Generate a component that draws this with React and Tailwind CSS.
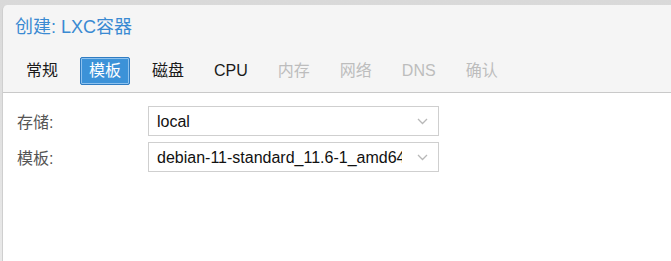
import React from "react";

const tabs = [
  { label: "常规" },
  { label: "模板", active: true },
  { label: "磁盘" },
  { label: "CPU" },
  { label: "内存", disabled: true },
  { label: "网络", disabled: true },
  { label: "DNS", disabled: true },
  { label: "确认", disabled: true },
];

const Chevron = () => (
  <svg width="11" height="7" viewBox="0 0 11 7" fill="none">
    <path d="M1 1l4.5 4.5L10 1" stroke="#b8b8b8" strokeWidth="1.3" />
  </svg>
);

const Combo = ({ value }) => (
  <div className="flex h-[30px] w-[291px] items-center border border-[#cfcfcf] bg-white">
    <div className="flex-1 overflow-hidden whitespace-nowrap pl-[8px] pt-[2px] text-[16px] text-[#111]">
      {value}
    </div>
    <div className="flex w-[36px] items-center justify-center pl-[4px]">
      <Chevron />
    </div>
  </div>
);

export default function App() {
  return (
    <div
      className="h-[261px] w-[671px] overflow-hidden bg-gradient-to-b from-[#d9d9d9] to-[#e9e9e9] pl-[2px] pt-[5px]"
      style={{ fontFamily: '"Liberation Sans", "Noto Sans CJK SC", sans-serif' }}
    >
      <div className="flex h-full flex-col overflow-hidden rounded-tl-[5px] border-l border-[#cfcfcf] bg-[#f5f5f5]">
        {/* Header */}
        <div className="h-[88px] border-b border-[#c9c9c9]">
          <div className="pl-[12px] pt-[10px] text-[18px] leading-[24px] text-[#3a8ad2]">
            创建: LXC容器
          </div>
          <div className="mt-[18px] flex gap-[14px] pl-[15px]">
            {tabs.map((t) => (
              <div
                key={t.label}
                className={
                  t.active
                    ? "flex h-[28px] items-center rounded-[2px] border border-[#2f7cc2] bg-[#3c92d8] px-[8px] text-[16px] text-white shadow-[inset_0_0_0_1px_#8ec2ee]"
                    : t.disabled
                    ? "flex h-[28px] items-center px-[8px] text-[16px] text-[#bdbdbd]"
                    : "flex h-[28px] items-center px-[8px] text-[16px] text-[#1a1a1a]"
                }
              >
                {t.label}
              </div>
            ))}
          </div>
        </div>

        {/* Body */}
        <div className="flex-1 bg-white pl-[14px] pt-[13px]">
          <div className="flex flex-col gap-[6px]">
            <div className="flex items-center">
              <div className="w-[131px] pt-[3px] text-[16px] text-[#555]">存储:</div>
              <Combo value="local" />
            </div>
            <div className="flex items-center">
              <div className="w-[131px] pt-[3px] text-[16px] text-[#555]">模板:</div>
              <Combo value="debian-11-standard_11.6-1_amd64.tar.zst" />
            </div>
          </div>
        </div>
      </div>
    </div>
  );
}
